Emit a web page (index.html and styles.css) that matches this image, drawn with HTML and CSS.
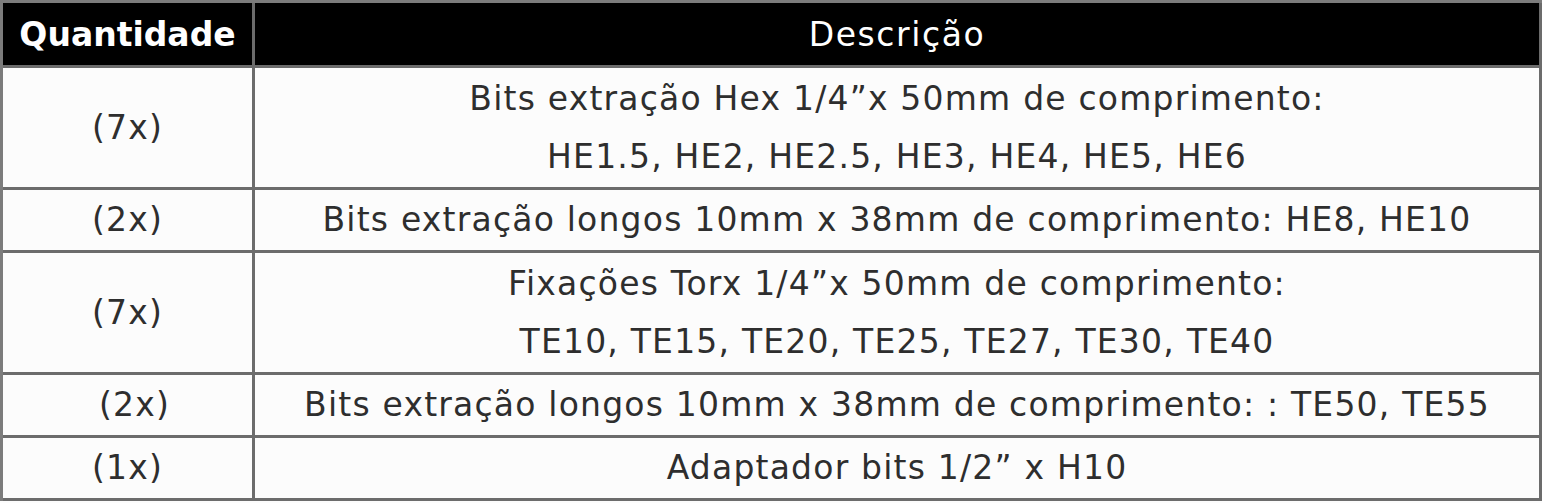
FILE: index.html
```html
<!DOCTYPE html>
<html lang="pt">
<head>
<meta charset="utf-8">
<title>Conteúdo</title>
<link rel="stylesheet" href="styles.css">
</head>
<body>
<table class="spec">
  <colgroup>
    <col class="col-qty">
    <col class="col-desc">
  </colgroup>
  <thead>
    <tr class="head">
      <th class="qty">Quantidade</th>
      <th class="desc">Descrição</th>
    </tr>
  </thead>
  <tbody>
    <tr class="double">
      <td class="qty">(7x)</td>
      <td class="desc">Bits extração Hex 1/4”x 50mm de comprimento:<br>HE1.5, HE2, HE2.5, HE3, HE4, HE5, HE6</td>
    </tr>
    <tr class="single">
      <td class="qty">(2x)</td>
      <td class="desc">Bits extração longos 10mm x 38mm de comprimento: HE8, HE10</td>
    </tr>
    <tr class="double">
      <td class="qty">(7x)</td>
      <td class="desc">Fixações Torx 1/4”x 50mm de comprimento:<br>TE10, TE15, TE20, TE25, TE27, TE30, TE40</td>
    </tr>
    <tr class="single">
      <td class="qty shift">(2x)</td>
      <td class="desc">Bits extração longos 10mm x 38mm de comprimento: : TE50, TE55</td>
    </tr>
    <tr class="single last">
      <td class="qty">(1x)</td>
      <td class="desc">Adaptador bits 1/2” x H10</td>
    </tr>
  </tbody>
</table>
</body>
</html>
```

FILE: styles.css
```css
html, body {
  margin: 0;
  padding: 0;
  background: #fcfcfc;
}

.spec {
  width: 1542px;
  table-layout: fixed;
  border-collapse: separate;
  border-spacing: 0;
  border-top: 3px solid #7c7c7c;
  border-left: 3px solid #7c7c7c;
  font-family: "DejaVu Sans", sans-serif;
  font-size: 33px;
  letter-spacing: 1.2px;
  color: #2e2e2e;
  background: #fcfcfc;
}

.col-qty {
  width: 252px;
}

.spec th,
.spec td {
  border-right: 3px solid #6c6c6c;
  border-bottom: 3px solid #6c6c6c;
  padding: 0;
  text-align: center;
  vertical-align: middle;
  white-space: nowrap;
}

.head th {
  background: #000;
  color: #fff;
  height: 62px;
  font-weight: 400;
  letter-spacing: 1.6px;
}

.head th.qty {
  font-weight: 700;
  letter-spacing: 0;
}

.double td {
  height: 119px;
  line-height: 58px;
}

.single td {
  height: 60px;
  line-height: 58px;
}

.shift {
  padding-left: 14px !important;
}
```
